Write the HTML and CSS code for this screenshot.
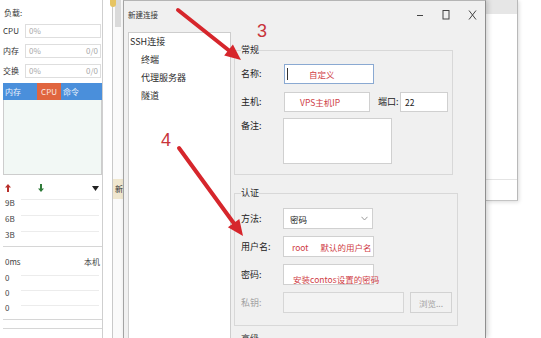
FILE: index.html
```html
<!DOCTYPE html>
<html lang="zh">
<head>
<meta charset="utf-8">
<title>新建连接</title>
<link rel="stylesheet" href="styles.css">
</head>
<body>
<div class="screen">
  <aside class="side">
    <div class="load">负载:</div>
    <div class="stats">
      <div class="stat"><span class="sl">CPU</span><div class="bar"><span>0%</span></div></div>
      <div class="stat"><span class="sl">内存</span><div class="bar"><span>0%</span><span>0/0</span></div></div>
      <div class="stat"><span class="sl">交换</span><div class="bar"><span>0%</span><span>0/0</span></div></div>
    </div>
    <div class="tabs"><span class="tab first">内存</span><span class="tab on">CPU</span><span class="tab">命令</span></div>
    <div class="pane"></div>
    <div class="net">
      <svg class="ico up" width="6" height="8" viewBox="0 0 6 8"><path d="M3 0 L6 3.5 H4 V8 H2 V3.5 H0 Z"/></svg>
      <svg class="ico down" width="6" height="8" viewBox="0 0 6 8"><path d="M3 8 L6 4.5 H4 V0 H2 V4.5 H0 Z"/></svg>
      <svg class="ico dd" width="7" height="5" viewBox="0 0 7 5"><path d="M0 0 H7 L3.5 5 Z"/></svg>
    </div>
    <div class="graph">
      <div class="gr">9B</div>
      <div class="gr">6B</div>
      <div class="gr">3B</div>
    </div>
    <div class="ping"><span>0ms</span><span>本机</span></div>
    <div class="graph g2">
      <div class="gr">0</div>
      <div class="gr">0</div>
      <div class="gr">0</div>
    </div>
    <div class="more"></div>
  </aside>

  <div class="gap">
    <div class="gl"></div>
    <div class="gstrip">
      <div class="gtop"></div>
      <div class="gtab">新</div>
    </div>
  </div>

  <section class="dialog">
    <div class="titlebar">
      <span class="title">新建连接</span>
      <div class="ctrls">
        <span class="ctrl"><svg width="8" height="10" viewBox="0 0 8 10"><path d="M1 5.5 H7" stroke="#444" stroke-width="1"/></svg></span>
        <span class="ctrl"><svg width="8" height="10" viewBox="0 0 8 10"><rect x="1" y="0.5" width="6" height="8.5" fill="none" stroke="#444" stroke-width="1"/></svg></span>
        <span class="ctrl"><svg width="9" height="10" viewBox="0 0 9 10"><path d="M1 0.5 L8 9.5 M8 0.5 L1 9.5" stroke="#444" stroke-width="1"/></svg></span>
      </div>
    </div>
    <div class="dbody">
      <nav class="tree">
        <div class="item">SSH连接</div>
        <div class="item sub">终端</div>
        <div class="item sub">代理服务器</div>
        <div class="item sub">隧道</div>
      </nav>
      <div class="forms">
        <fieldset class="group g-general">
          <legend>常规</legend>
          <div class="row r1">
            <span class="lab">名称:</span>
            <div class="inp focus w-name"><span class="caret"></span><span class="red t-name">自定义</span></div>
          </div>
          <div class="row r2">
            <span class="lab">主机:</span>
            <div class="inp w-host"><span class="red t-host">VPS主机IP</span></div>
            <span class="lab-port">端口:</span>
            <div class="inp w-port"><span class="t-port">22</span></div>
          </div>
          <div class="row r3">
            <span class="lab top">备注:</span>
            <div class="inp note"></div>
          </div>
        </fieldset>

        <fieldset class="group g-auth">
          <legend>认证</legend>
          <div class="row a1">
            <span class="lab">方法:</span>
            <div class="inp sel"><span class="t-sel">密码</span>
              <svg class="chev" width="7" height="5" viewBox="0 0 7 5"><path d="M0.5 0.8 L3.5 4 L6.5 0.8" fill="none" stroke="#9a9a9a" stroke-width="1"/></svg>
            </div>
          </div>
          <div class="row a2">
            <span class="lab">用户名:</span>
            <div class="inp w-user"><span class="red t-root">root</span><span class="red t-def">默认的用户名</span></div>
          </div>
          <div class="row a3">
            <span class="lab">密码:</span>
            <div class="inp w-pass low"><span class="red t-pass">安装contos设置的密码</span></div>
          </div>
          <div class="row a4">
            <span class="lab dim">私钥:</span>
            <div class="inp off w-key"></div>
            <span class="btn">浏览...</span>
          </div>
        </fieldset>

        <fieldset class="group g-more">
          <legend>高级</legend>
        </fieldset>
      </div>
    </div>
  </section>

  <div class="back">
    <div class="win">
      <div class="win-top"></div>
      <div class="win-mid"></div>
    </div>
  </div>

  <span class="yicon"></span>

  <svg class="marks" width="541" height="338" viewBox="0 0 541 338">
    <g stroke="#d6262c" stroke-width="4" stroke-linecap="round" fill="none">
      <line x1="178" y1="10" x2="229" y2="50.5"/>
      <line x1="179" y1="148" x2="234" y2="223.5"/>
    </g>
    <g fill="#d6262c">
      <polygon points="241,60 224.2,55.5 232.9,44.5"/>
      <polygon points="243,236 227.9,227.2 239.3,219"/>
    </g>
    <g fill="#c8343a" font-family="Liberation Sans, sans-serif" font-size="18">
      <text x="257" y="37">3</text>
      <text x="161" y="146">4</text>
    </g>
  </svg>
</div>
</body>
</html>
```

FILE: styles.css
```css
* { box-sizing: border-box; }
html, body { margin: 0; padding: 0; }
body {
  width: 541px;
  height: 338px;
  overflow: hidden;
  background: #fff;
  font-family: "Noto Sans CJK SC", "Noto Sans", sans-serif;
  color: #2a2a2a;
}
.screen {
  position: relative;
  display: flex;
  width: 541px;
  height: 338px;
  overflow: hidden;
}

/* ---------- left monitor panel ---------- */
.side {
  width: 103px;
  flex: none;
  border-right: 1px solid #cfcfcf;
  padding: 6px 0 0 3px;
  font-size: 8px;
  color: #333;
  background: #fff;
}
.load { height: 14px; line-height: 14px; padding-left: 1px; }
.stats { margin-top: 4px; display: flex; flex-direction: column; gap: 6px; }
.stat { display: flex; align-items: center; height: 14px; }
.sl { width: 22px; line-height: 14px; }
.bar {
  width: 76px;
  height: 14px;
  border: 1px solid #dedede;
  display: flex;
  justify-content: space-between;
  padding: 0 2px 0 3px;
  line-height: 12px;
  color: #a8a8a8;
}
.tabs {
  margin-top: 5px;
  height: 17px;
  background: #4a8fdb;
  display: flex;
  align-items: stretch;
  color: #e9f1fc;
  line-height: 17px;
}
.tab { padding: 0 2px; }
.tab.first { width: 34px; }
.tab.on { width: 24px; background: #e0653f; text-align: center; color: #fbe9e2; }
.pane {
  height: 75px;
  border: 1px solid #cdcdcd;
  border-top: none;
  background: #f2f8f5;
}
.net {
  margin-top: 6px;
  height: 14px;
  display: flex;
  align-items: center;
  padding-left: 2px;
}
.ico { display: block; }
.up { fill: #b8302b; }
.down { fill: #2f7b3a; margin-left: 27px; }
.dd { fill: #222; margin-left: auto; margin-right: 3px; }
.graph {
  padding-bottom: 3px;
  border-bottom: 1px solid #d6d6d6;
}
.gr {
  height: 16px;
  line-height: 16px;
  padding-left: 2px;
  color: #444;
  background: linear-gradient(#ececec, #ececec) no-repeat 18px 4px / 78px 1px;
}
.ping {
  margin-top: 7px;
  line-height: 16px;
  display: flex;
  justify-content: space-between;
  padding: 0 2px;
  color: #444;
}
.g2 { padding-bottom: 4px; }
.g2 .gr { height: 15px; line-height: 15px; background-position: 18px 5px; }
.more { margin-top: 8px; border-top: 1px solid #d6d6d6; height: 20px; }

/* ---------- gap between windows ---------- */
.gap { width: 20px; flex: none; display: flex; }
.gl { width: 9px; background: #fff; }
.gstrip {
  width: 11px;
  border-left: 1px solid #c9c9c9;
  background: #fafafa;
  display: flex;
  flex-direction: column;
}
.gtop { height: 27px; margin: 0 2px; background: #dadada; }
.gtab {
  margin-top: 152px;
  height: 20px;
  background: #f0e7cf;
  font-size: 8px;
  line-height: 20px;
  color: #333;
  text-align: right;
  overflow: hidden;
  white-space: nowrap;
  direction: rtl;
}
.yicon {
  position: absolute;
  left: 110px;
  top: 0;
  width: 6px;
  height: 7px;
  border-radius: 0 0 3px 3px;
  background: #e6c463;
}

/* ---------- dialog ---------- */
.dialog {
  width: 363px;
  height: 338px;
  flex: none;
  background: #f0f0f0;
  border-left: 1px solid #a3a3a3;
  border-right: 1px solid #8f8f8f;
  border-top: 1px solid #b5b5b5;
  box-shadow: 2px 0 5px rgba(0, 0, 0, 0.18);
  display: flex;
  flex-direction: column;
  z-index: 1;
}
.titlebar {
  height: 31px;
  flex: none;
  display: flex;
  align-items: center;
  padding: 0 0 3px 4px;
}
.title { font-size: 7.5px; color: #333; line-height: 10px; }
.ctrls { margin-left: auto; display: flex; }
.ctrl { width: 26px; display: flex; justify-content: center; }
.ctrl svg { display: block; }

.dbody { display: flex; padding-left: 4px; flex: 1; min-height: 0; }
.tree {
  width: 103px;
  flex: none;
  height: 330px;
  background: #fff;
  border: 1px solid #cdcdcd;
  font-size: 9px;
  line-height: 18px;
  padding-left: 1px;
  color: #2a2a2a;
}
.tree .sub { padding-left: 11px; }

.forms {
  margin-left: 3px;
  padding-top: 11px;
  display: flex;
  flex-direction: column;
}
.group {
  margin: 0;
  min-width: 0;
  border: 1px solid #d8d8d8;
}
.group legend {
  padding: 0;
  font-size: 9px;
  line-height: 14px;
  color: #2a2a2a;
}
.g-general { width: 219px; padding: 7px 0 10px 6px; }
.g-auth { width: 224px; margin-top: 11px; padding: 8px 0 12px 6px; }
.g-more { width: 224px; margin-top: 6px; padding: 0 0 10px 6px; }

.row { display: flex; align-items: center; height: 20px; }
.r2 { margin-top: 8px; }
.r3 { margin-top: 6px; height: 46px; align-items: flex-start; }
.g-auth .row { height: 21px; }
.g-auth .row + .row { margin-top: 7px; }

.lab { width: 42px; flex: none; font-size: 9px; line-height: 14px; color: #222; }
.lab.top { margin-top: 1px; }
.lab.dim { color: #a3a3a3; }
.lab-port { width: 22px; margin-left: 8px; font-size: 9px; line-height: 14px; color: #222; }

.inp {
  height: 100%;
  background: #fff;
  border: 1px solid #d0d0d0;
  display: flex;
  align-items: center;
  font-size: 8.5px;
  line-height: 12px;
  white-space: nowrap;
  flex: none;
}
.red { color: #cf3c45; }
.focus { border-color: #8aa9d2; }
.w-name { width: 90px; margin-left: 1px; }
.caret { width: 1px; height: 12px; background: #333; margin-left: 2px; }
.t-name { margin-left: 21px; }
.w-host { width: 86px; margin-left: 1px; }
.t-host { margin-left: 15px; }
.w-port { width: 48px; }
.t-port { margin-left: 4px; color: #222; }
.note { width: 109px; height: 46px; }

.sel { width: 90px; justify-content: space-between; padding: 0 4px 0 6px; }
.t-sel { color: #222; }
.chev { display: block; }
.w-user { width: 91px; padding-left: 8px; }
.t-def { margin-left: 12px; }
.w-pass { width: 91px; padding-left: 9px; }
.low { align-items: flex-end; overflow: visible; }
.t-pass { margin-bottom: -1px; }
.off { width: 121px; background: #f3f3f3; border-color: #d6d6d6; }
.btn {
  margin-left: 6px;
  width: 42px;
  height: 100%;
  border: 1px solid #d2d2d2;
  background: #f1f1f1;
  color: #a3a3a3;
  font-size: 8.5px;
  display: flex;
  align-items: center;
  justify-content: center;
}

/* ---------- window behind, right ---------- */
.back { flex: 1; display: flex; align-items: flex-start; background: #fff; }
.win {
  width: 32px;
  height: 201px;
  border-right: 1px solid #b9b9b9;
  border-bottom: 1px solid #c4c4c4;
  box-shadow: 1px 1px 4px rgba(0, 0, 0, 0.15);
  background: #fff;
  display: flex;
  flex-direction: column;
}
.win-top { height: 14px; background: #e6e6e6; }
.win-mid { height: 166px; border-bottom: 1px solid #e4e4e4; }

/* ---------- annotations ---------- */
.marks {
  position: absolute;
  left: 0;
  top: 0;
  pointer-events: none;
  z-index: 5;
}
```
